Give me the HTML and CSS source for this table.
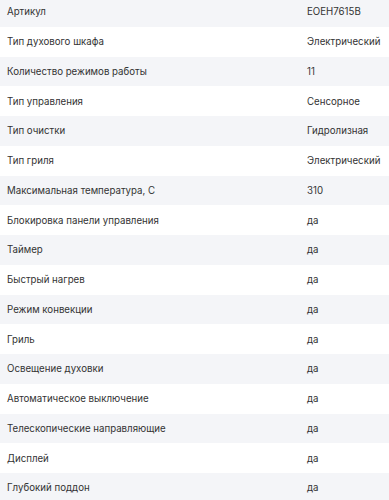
FILE: index.html
```html
<!DOCTYPE html>
<html lang="ru">
<head>
<meta charset="utf-8">
<link rel="stylesheet" href="styles.css">
</head>
<body>
<div class="specs">
  <div class="row"><span class="name">Артикул</span><span class="val">EOEH7615B</span></div>
  <div class="row"><span class="name">Тип духового шкафа</span><span class="val">Электрический</span></div>
  <div class="row"><span class="name">Количество режимов работы</span><span class="val">11</span></div>
  <div class="row"><span class="name">Тип управления</span><span class="val">Сенсорное</span></div>
  <div class="row"><span class="name">Тип очистки</span><span class="val">Гидролизная</span></div>
  <div class="row"><span class="name">Тип гриля</span><span class="val">Электрический</span></div>
  <div class="row"><span class="name">Максимальная температура, С</span><span class="val">310</span></div>
  <div class="row"><span class="name">Блокировка панели управления</span><span class="val">да</span></div>
  <div class="row"><span class="name">Таймер</span><span class="val">да</span></div>
  <div class="row"><span class="name">Быстрый нагрев</span><span class="val">да</span></div>
  <div class="row"><span class="name">Режим конвекции</span><span class="val">да</span></div>
  <div class="row"><span class="name">Гриль</span><span class="val">да</span></div>
  <div class="row"><span class="name">Освещение духовки</span><span class="val">да</span></div>
  <div class="row"><span class="name">Автоматическое выключение</span><span class="val">да</span></div>
  <div class="row"><span class="name">Телескопические направляющие</span><span class="val">да</span></div>
  <div class="row"><span class="name">Дисплей</span><span class="val">да</span></div>
  <div class="row"><span class="name">Глубокий поддон</span><span class="val">да</span></div>
</div>
</body>
</html>
```
FILE: styles.css
```css
html, body {
  margin: 0;
  padding: 0;
  background: #ffffff;
}
body {
  font-family: Inter, "Noto Sans", sans-serif;
  font-size: 9.7px;
  color: #333333;
  overflow: hidden;
}
.specs {
  margin-top: -3px;
  display: flex;
  flex-direction: column;
}
.row {
  display: grid;
  grid-template-columns: 300px 1fr;
  align-items: center;
  height: 29.75px;
  padding: 0 7px;
  box-sizing: border-box;
  white-space: nowrap;
}
.row:nth-child(odd) {
  background: #f4f5f8;
}
```
